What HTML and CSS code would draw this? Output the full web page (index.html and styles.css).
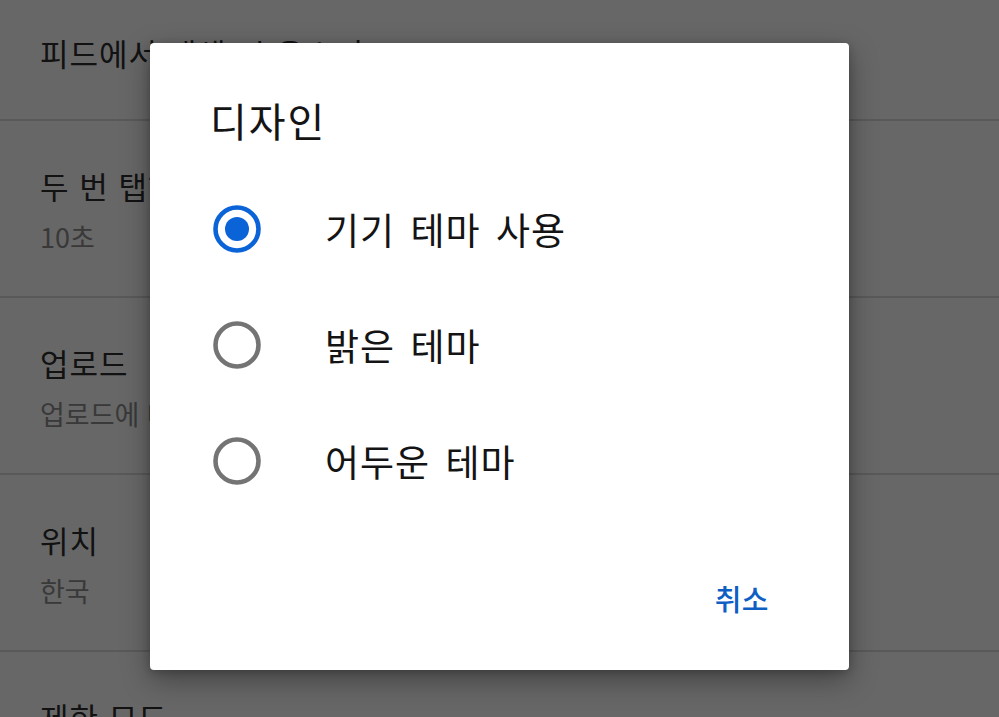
FILE: index.html
```html
<!DOCTYPE html>
<html lang="ko">
<head>
<meta charset="utf-8">
<title>디자인</title>
<link rel="stylesheet" href="styles.css">
</head>
<body>
<div class="screen">
  <ul class="settings">
    <li class="row row-first"><span class="row-title">피드에서 재생 시 음소거</span></li>
    <li class="row"><span class="row-title">두 번 탭하여 탐색</span><span class="row-sub">10초</span></li>
    <li class="row"><span class="row-title">업로드</span><span class="row-sub">업로드에 대한 네트워크 환경설정 지정</span></li>
    <li class="row"><span class="row-title">위치</span><span class="row-sub">한국</span></li>
    <li class="row"><span class="row-title">제한 모드</span><span class="row-sub">사용 안함</span></li>
  </ul>
  <div class="scrim"></div>
  <div class="dialog" role="dialog">
    <h2 class="dialog-title">디자인</h2>
    <div class="options">
      <label class="option">
        <svg class="radio" viewBox="0 0 48 48" width="48" height="48"><circle cx="24" cy="24" r="21.5" fill="none" stroke="#0b63d8" stroke-width="4.6"/><circle cx="24" cy="24" r="12" fill="#0b63d8"/></svg>
        <span class="option-label">기기 테마 사용</span>
      </label>
      <label class="option">
        <svg class="radio" viewBox="0 0 48 48" width="48" height="48"><circle cx="24" cy="24" r="21.5" fill="none" stroke="#747474" stroke-width="4.6"/></svg>
        <span class="option-label">밝은 테마</span>
      </label>
      <label class="option">
        <svg class="radio" viewBox="0 0 48 48" width="48" height="48"><circle cx="24" cy="24" r="21.5" fill="none" stroke="#747474" stroke-width="4.6"/></svg>
        <span class="option-label">어두운 테마</span>
      </label>
    </div>
    <div class="actions">
      <button class="btn-text">취소</button>
    </div>
  </div>
</div>
</body>
</html>
```
FILE: styles.css
```css
* { box-sizing: border-box; }
html, body {
  margin: 0;
  padding: 0;
  width: 999px;
  height: 717px;
  overflow: hidden;
  background: #ffffff;
  font-family: "Noto Sans CJK KR", "Noto Sans", sans-serif;
}
.screen {
  position: relative;
  width: 999px;
  height: 717px;
  overflow: hidden;
}
.settings {
  list-style: none;
  margin: 0;
  padding: 0;
  display: flex;
  flex-direction: column;
}
.row {
  height: 177px;
  padding: 44px 40px 0;
  display: flex;
  flex-direction: column;
  border-bottom: 2px solid #dcdcdc;
}
.row-first {
  height: 121px;
  padding-top: 32px;
}
.row-title {
  font-size: 31px;
  line-height: 42px;
  color: #2e2e2e;
  letter-spacing: 1px;
  white-space: nowrap;
}
.row-sub {
  font-size: 27px;
  line-height: 40px;
  margin-top: 10px;
  color: #8e8e8e;
  white-space: nowrap;
}
.scrim {
  position: absolute;
  inset: 0;
  background: rgba(0, 0, 0, 0.597);
}
.dialog {
  position: absolute;
  left: 150px;
  top: 43px;
  width: 699px;
  height: 627px;
  background: #ffffff;
  border-radius: 4px;
  box-shadow: 0 10px 28px rgba(0, 0, 0, 0.35), 0 2px 8px rgba(0, 0, 0, 0.2);
  display: flex;
  flex-direction: column;
}
.dialog-title {
  margin: 0;
  padding: 54px 0 0 60px;
  font-size: 40px;
  line-height: 46px;
  font-weight: 400;
  color: #141414;
  letter-spacing: 2px;
}
.options {
  margin-top: 28px;
  display: flex;
  flex-direction: column;
}
.option {
  height: 116px;
  display: flex;
  align-items: center;
  padding-left: 63px;
  gap: 64px;
}
.radio {
  flex: none;
  display: block;
}
.option-label {
  font-size: 37px;
  line-height: 46px;
  color: #141414;
  letter-spacing: 1px;
  word-spacing: 4px;
}
.actions {
  margin-top: 59px;
  display: flex;
  justify-content: flex-end;
  padding-right: 80px;
}
.btn-text {
  border: 0;
  background: none;
  padding: 0;
  font-family: inherit;
  font-size: 29px;
  line-height: 40px;
  color: #0d5fc4;
  font-weight: 500;
  letter-spacing: 0.5px;
}
```
